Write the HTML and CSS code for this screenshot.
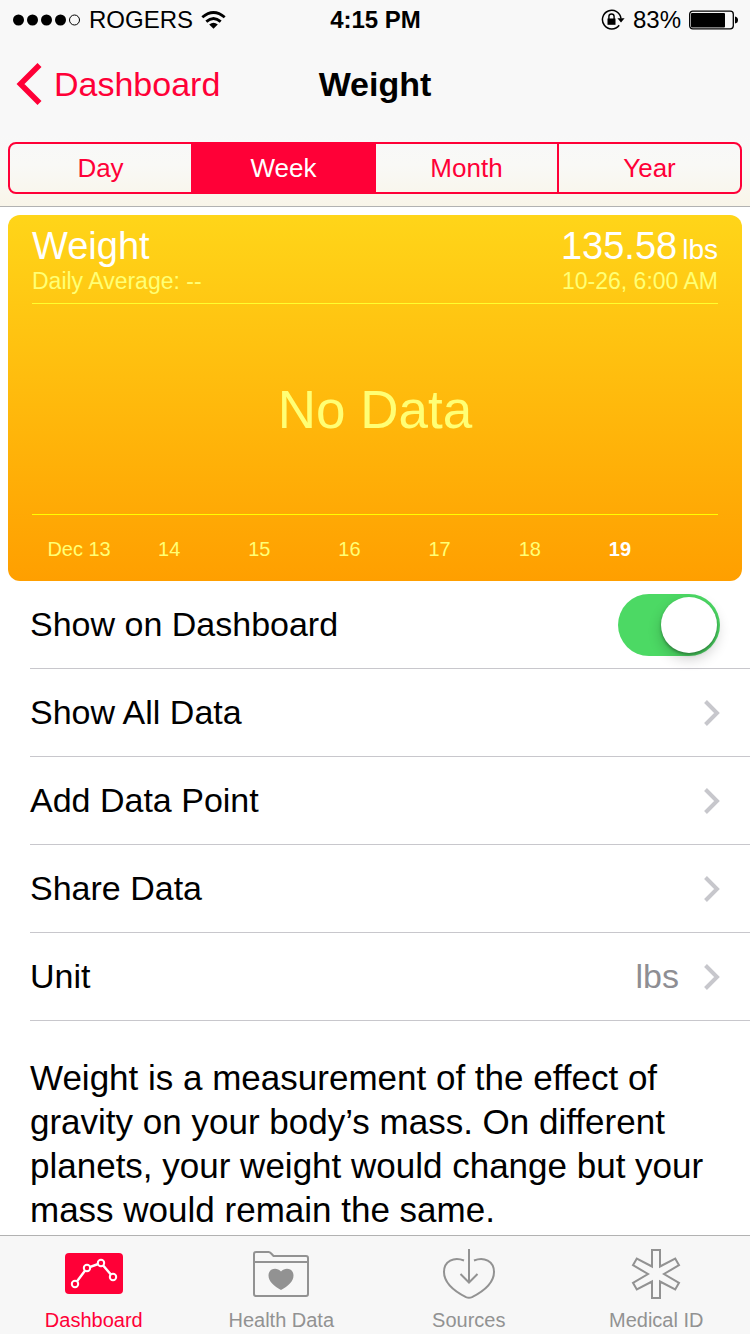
FILE: index.html
```
<!DOCTYPE html>
<html lang="en">
<head>
<meta charset="UTF-8"/>
<meta name="viewport" content="width=device-width, initial-scale=1.0"/>
<title>Weight</title>
<link rel="stylesheet" href="styles.css">
</head>
<body>
  <header class="top">
    <div class="status">
      <div class="status-left">
        <svg width="68" height="12" viewBox="0 0 68 12" aria-hidden="true">
          <circle cx="5.5" cy="6" r="5.5"/>
          <circle cx="19.5" cy="6" r="5.5"/>
          <circle cx="33.5" cy="6" r="5.5"/>
          <circle cx="47.5" cy="6" r="5.5"/>
          <circle cx="61.5" cy="6" r="5" fill="none" stroke="#000"/>
        </svg>
        <span>ROGERS</span>
        <svg width="25" height="18" viewBox="0 0 25 18" aria-hidden="true">
          <g fill="none" stroke="#000" stroke-width="2.8">
            <path d="M1.3 6.3Q12.5 -3.3 23.7 6.3"/>
            <path d="M5.3 10.6Q12.5 4.3 19.7 10.6"/>
          </g>
          <path d="M8.2 13.5Q12.5 9.8 16.8 13.5L12.5 17.8Z"/>
        </svg>
      </div>
      <span class="clock">4:15 PM</span>
      <div class="status-right">
        <svg width="24" height="22" viewBox="0 0 24 22" aria-hidden="true">
          <path d="M18.2 16.2A9.3 9.3 0 1 1 20 9.6" fill="none" stroke="#000" stroke-width="1.5"/>
          <path d="M16.4 9.3h7.2L20 13.6Z"/>
          <rect x="6.5" y="9.5" width="8" height="6.3"/>
          <path d="M7.9 10V7.6a2.6 2.6 0 0 1 5.2 0V10" fill="none" stroke="#000" stroke-width="1.4"/>
        </svg>
        <span>83%</span>
        <svg width="49" height="20" viewBox="0 0 49 20" aria-hidden="true">
          <rect x=".7" y="1.2" width="43.6" height="17.6" rx="3" fill="none" stroke="#000" stroke-width="1.3"/>
          <rect x="2" y="3" width="34" height="14.5" rx="1"/>
          <path d="M46 6.5q3 .5 3 3.5t-3 3.5Z"/>
        </svg>
      </div>
    </div>
    <nav class="navbar">
      <a class="back" href="#">
        <svg width="26" height="42" viewBox="0 0 26 42" aria-hidden="true">
          <path d="M23.5 2L4.500 21L23.500 40" fill="none" stroke="currentColor" stroke-width="5.6"/>
        </svg>
        Dashboard
      </a>
      <h1>Weight</h1>
    </nav>
    <div class="segments">
      <button type="button">Day</button>
      <button type="button" class="active">Week</button>
      <button type="button">Month</button>
      <button type="button">Year</button>
    </div>
  </header>

  <main>
    <section class="card">
      <div class="card-head">
        <div>
          <h2>Weight</h2>
          <p>Daily Average: --</p>
        </div>
        <div class="reading">
          <div class="value"><span>135.58</span><small>lbs</small></div>
          <p>10-26, 6:00 AM</p>
        </div>
      </div>
      <div class="chart">No Data</div>
      <div class="days">
        <span>Dec 13</span>
        <span>14</span>
        <span>15</span>
        <span>16</span>
        <span>17</span>
        <span>18</span>
        <span class="today">19</span>
      </div>
    </section>

    <div class="list">
      <div class="row">
        <label for="show">Show on Dashboard</label>
        <input id="show" class="switch" type="checkbox" role="switch" checked>
      </div>
      <a class="row" href="#">
        <span>Show All Data</span>
        <svg class="chevron" viewBox="0 0 16 26" aria-hidden="true"><path d="M1.5 1.5L13 13L1.5 24.5"/></svg>
      </a>
      <a class="row" href="#">
        <span>Add Data Point</span>
        <svg class="chevron" viewBox="0 0 16 26" aria-hidden="true"><path d="M1.5 1.5L13 13L1.5 24.5"/></svg>
      </a>
      <a class="row" href="#">
        <span>Share Data</span>
        <svg class="chevron" viewBox="0 0 16 26" aria-hidden="true"><path d="M1.5 1.5L13 13L1.5 24.5"/></svg>
      </a>
      <a class="row" href="#">
        <span>Unit</span>
        <span class="unit">lbs</span>
        <svg class="chevron" viewBox="0 0 16 26" aria-hidden="true"><path d="M1.5 1.5L13 13L1.5 24.5"/></svg>
      </a>
    </div>

    <p class="about">Weight is a measurement of the effect of gravity on your body’s mass. On different planets, your weight would change but your mass would remain the same.</p>
  </main>

  <nav class="tabs">
    <a class="active" href="#">
      <svg width="58" height="52" viewBox="0 0 58 52" aria-hidden="true">
        <rect y="6" width="58" height="41" rx="4" fill="currentColor"/>
        <path d="M10 37L22 21L36 16L48 30" fill="none" stroke="#fff" stroke-width="2.4"/>
        <g fill="#ff0037" stroke="#fff" stroke-width="2">
          <circle cx="10" cy="37" r="3.2"/>
          <circle cx="22" cy="21" r="3.2"/>
          <circle cx="36" cy="16" r="3.2"/>
          <circle cx="48" cy="30" r="3.2"/>
        </g>
      </svg>
      Dashboard
    </a>
    <a href="#">
      <svg width="56" height="52" viewBox="0 0 56 52" aria-hidden="true">
        <path d="M1 47V7a2 2 0 0 1 2-2H15.500q1.500 0 2.500 1.300L20.500 9H53a2 2 0 0 1 2 2V47a2 2 0 0 1-2 2H3a2 2 0 0 1-2-2ZM1 15H55" fill="none" stroke="currentColor" stroke-width="2"/>
        <path d="M28 43C21 39 15.500 34.500 15.500 28.500C15.500 21.500 23.500 19.500 28 24.500C32.500 19.500 40.500 21.500 40.500 28.500C40.500 34.500 35 39 28 43Z" fill="currentColor"/>
      </svg>
      Health Data
    </a>
    <a href="#">
      <svg width="54" height="52" viewBox="0 0 54 52" aria-hidden="true">
        <g fill="none" stroke="currentColor" stroke-width="2">
          <path d="M22 13.500C12 9.500 2 14 2 25C2 35 11 43.500 24 50.200Q27 51.500 30 50.200C43 43.500 52 35 52 25C52 14 42 9.500 32 13.500"/>
          <path d="M27 2V35M18.500 27L27 35.500L35.500 27"/>
        </g>
      </svg>
      Sources
    </a>
    <a href="#">
      <svg width="50" height="52" viewBox="0 0 50 52" aria-hidden="true">
        <path d="M21 3H29V19.500L44.200 11.500L48 18.200L33 27L48 35.800L44.200 42.500L29 34.500V51H21V34.500L5.800 42.500L2 35.800L17 27L2 18.200L5.800 11.500L21 19.500Z" fill="none" stroke="currentColor" stroke-width="2"/>
      </svg>
      Medical ID
    </a>
  </nav>
</body>
</html>
```

FILE: styles.css
```
* { box-sizing: border-box; }
body { margin: 0; min-height: 100vh; display: flex; flex-direction: column; background: #fff; color: #000; font-family: "Liberation Sans", Arial, sans-serif; font-size: 34px; }
h1, h2, p { margin: 0; font-weight: normal; }
a { color: inherit; text-decoration: none; }
svg { display: block; flex: none; }

.top { background: linear-gradient(#f8f8f8 65%, #f9f9f6 80%, #f9f5e9); border-bottom: 1px solid #b2b2b2; padding-bottom: 12px; }

.status { display: grid; grid-template-columns: 1fr auto 1fr; align-items: center; height: 40px; padding: 0 12px 0 13px; font-size: 24px; }
.status-left, .status-right { display: flex; align-items: center; gap: 8px; }
.status-right { justify-content: flex-end; }
.clock { font-weight: bold; }

.navbar { display: grid; grid-template-columns: 1fr auto 1fr; align-items: center; height: 88px; padding: 0 16px; }
.navbar h1 { font-size: 34px; font-weight: bold; }
.back { display: flex; align-items: center; gap: 12px; color: #ff0037; }

.segments { display: flex; height: 52px; margin: 14px 8px 0; border: 2px solid #ff0037; border-radius: 8px; overflow: hidden; }
.segments button { flex: 1; padding: 0; background: none; border: none; color: #ff0037; font: inherit; font-size: 26px; cursor: pointer; }
.segments button + button { border-left: 2px solid #ff0037; }
.segments .active { background: #ff0037; color: #fff; }

.card { margin: 8px 8px 0; padding: 8px 24px 0; border-radius: 12px; background: linear-gradient(#ffd519, #ff9f00); color: #ffff75; }
.card-head { display: flex; justify-content: space-between; height: 81px; border-bottom: 1px solid #ffff2e; font-size: 23px; line-height: 24px; }
.card-head h2, .value { height: 46px; color: #fff; font-size: 38px; line-height: 46px; }
.value { display: flex; justify-content: flex-end; align-items: baseline; gap: 5px; }
.value small { font-size: 28px; }
.chart { display: flex; align-items: center; justify-content: center; height: 211px; border-bottom: 1px solid #ffff00; font-size: 53px; }
.days { display: grid; grid-template-columns: repeat(7, 1fr); height: 66px; padding: 0 53px 0 2px; line-height: 68px; font-size: 20px; text-align: center; }
.today { color: #fff; font-weight: bold; }

.reading { text-align: right; }

.list { padding-left: 30px; }
.row { display: flex; align-items: center; height: 88px; padding-right: 30px; border-bottom: 1px solid #c8c7cc; }
.row > :first-child { flex: 1; }
.unit { color: #8e8e93; margin-right: 25px; }
.chevron { width: 16px; height: 26px; fill: none; stroke: #c7c7cc; stroke-width: 4; }

.switch { appearance: none; display: flex; align-items: center; width: 102px; height: 62px; margin: 0; padding: 3px; border-radius: 31px; background: #e5e5ea; cursor: pointer; }
.switch::before { content: ""; width: 56px; height: 56px; border-radius: 50%; background: #fff; box-shadow: 0 6px 14px rgba(0, 0, 0, .2), 0 2px 3px rgba(0, 0, 0, .3); }
.switch:checked { background: #4cd964; justify-content: flex-end; }

.about { padding: 35px 30px 0; font-size: 35px; line-height: 44px; }

.tabs { display: grid; grid-template-columns: repeat(4, 1fr); height: 99px; margin-top: auto; padding-top: 11px; background: #f7f7f7; border-top: 1px solid #b2b2b2; color: #929292; font-size: 20px; line-height: 24px; }
.tabs a { display: flex; flex-direction: column; align-items: center; gap: 9px; }
.tabs .active { color: #ff0037; }
```
